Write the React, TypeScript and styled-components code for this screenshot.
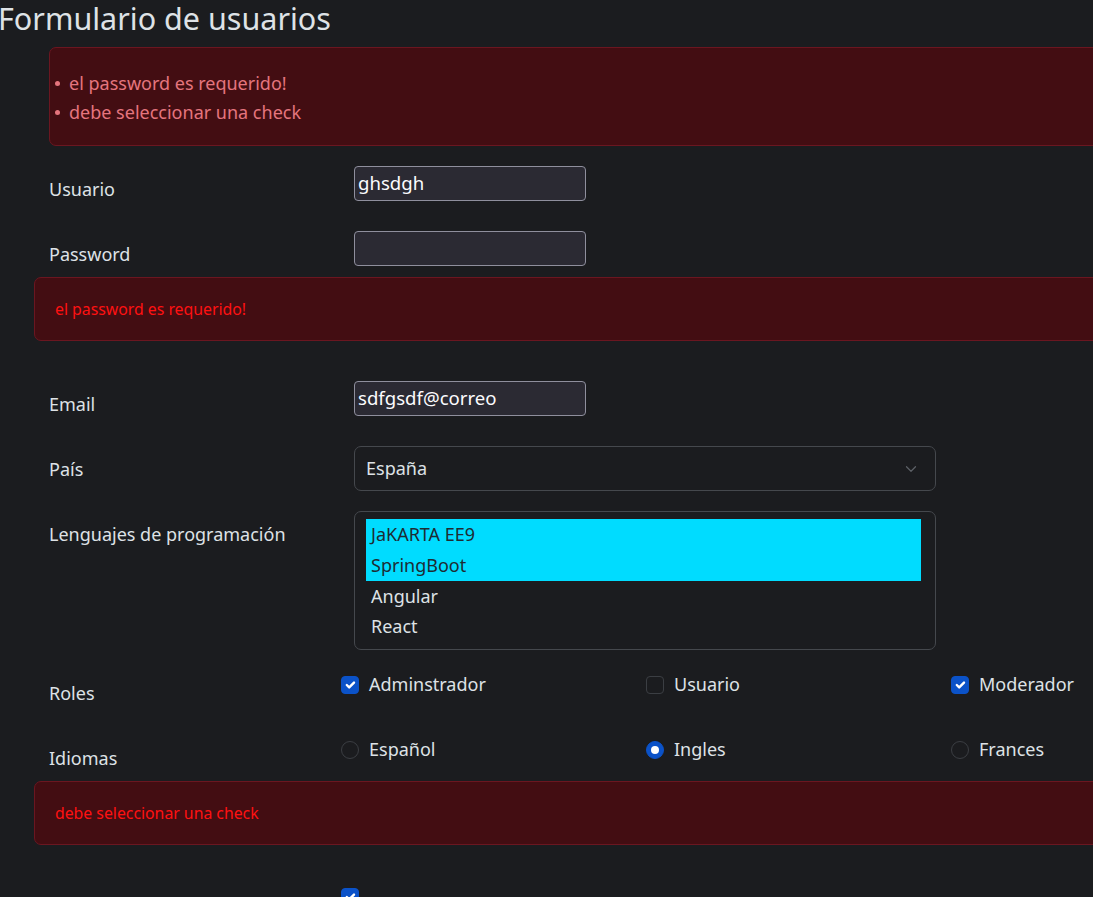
import React from 'react';
import styled, { createGlobalStyle } from 'styled-components';

const GlobalStyle = createGlobalStyle`
  html, body {
    margin: 0;
    padding: 0;
    background: #1b1c1f;
    overflow: hidden;
  }
  body {
    font-family: "Noto Sans", "Open Sans", sans-serif;
    font-size: 18px;
    line-height: 1.5;
    color: #dee2e6;
  }
  * {
    box-sizing: border-box;
  }
`;

const Title = styled.h1`
  margin: 0 0 10px -2px;
  font-size: 30.5px;
  font-weight: 400;
  line-height: 37px;
  color: #dee2e6;
`;

const Page = styled.div`
  width: 1300px;
`;

const Form = styled.form`
  padding-left: 49px;
`;

const SummaryAlert = styled.div`
  background: #430d12;
  border: 1px solid #6b1620;
  border-radius: 7px;
  padding: 21px 19px 18px 5px;
  margin-bottom: 20px;

  ul {
    margin: 0;
    padding: 0;
    list-style: none;
  }

  li {
    display: flex;
    align-items: center;
    color: #e5757e;
    line-height: 29px;
  }

  li::before {
    content: '';
    flex: none;
    width: 5px;
    height: 5px;
    border-radius: 50%;
    background: #e5757e;
    margin-right: 9px;
  }
`;

const FieldAlert = styled.div`
  margin: 1px 0 40px -15px;
  background: #430d12;
  border: 1px solid #6b1620;
  border-radius: 7px;
  padding: 19px 20px;
  color: #ff1111;
  font-size: 15.8px;
  line-height: 24px;
`;

const Row = styled.div<{ $tight?: boolean }>`
  display: grid;
  grid-template-columns: 305px 1fr;
  align-items: start;
  margin-bottom: ${(p) => (p.$tight ? '0' : '20px')};
`;

const Label = styled.label`
  padding: 9px 0 7px;
  line-height: 29px;
  color: #dee2e6;
`;

const TextInput = styled.div`
  width: 232px;
  height: 35px;
  background: #2b2a33;
  border: 1px solid #8f8f9d;
  border-radius: 4px;
  color: #fbfbfe;
  padding: 0 3px;
  font-size: 18.6px;
  line-height: 32px;
  white-space: nowrap;
`;

const SelectBox = styled.div`
  width: 582px;
  height: 45px;
  border: 1px solid #45484d;
  border-radius: 7px;
  padding: 0 16px 0 11px;
  display: flex;
  align-items: center;
  justify-content: space-between;
  color: #dee2e6;
`;

const ListBox = styled.div`
  width: 582px;
  height: 139px;
  border: 1px solid #45484d;
  border-radius: 7px;
  padding: 7px 14px 7px 11px;
`;

const Option = styled.div<{ $selected?: boolean }>`
  height: 30.75px;
  line-height: 30.75px;
  padding-left: 5px;
  background: ${(p) => (p.$selected ? '#00dcff' : 'transparent')};
  color: ${(p) => (p.$selected ? '#1e2c33' : '#dee2e6')};
`;

const CheckGroup = styled.div`
  display: grid;
  grid-template-columns: repeat(3, 305px);
  margin-left: -13px;
`;

const CheckItem = styled.div`
  display: flex;
  align-items: center;
  gap: 10px;
  line-height: 29px;
  white-space: nowrap;
`;

const Box = styled.span<{ $checked?: boolean; $round?: boolean }>`
  flex: none;
  width: 18px;
  height: 18px;
  border-radius: ${(p) => (p.$round ? '50%' : '4px')};
  border: 1px solid ${(p) => (p.$checked ? '#0b52c8' : '#3b3e43')};
  background: ${(p) => (p.$checked ? '#0b52c8' : 'transparent')};
  display: flex;
  align-items: center;
  justify-content: center;
`;

const LastRow = styled.div`
  display: grid;
  grid-template-columns: 305px 1fr;
  padding-top: 3px;
`;

const Check = ({ checked, round, label }: { checked?: boolean; round?: boolean; label?: string }) => (
  <CheckItem>
    <Box $checked={checked} $round={round}>
      {checked && !round && (
        <svg width="18" height="18" viewBox="0 0 20 20">
          <path d="m6 10 3 3 6-6" fill="none" stroke="#fff" strokeWidth="3" strokeLinecap="round" strokeLinejoin="round" />
        </svg>
      )}
      {checked && round && (
        <svg width="16" height="16" viewBox="-4 -4 8 8">
          <circle r="2" fill="#fff" />
        </svg>
      )}
    </Box>
    {label && <span>{label}</span>}
  </CheckItem>
);

const Chevron = () => (
  <svg width="16" height="12" viewBox="0 0 16 16" style={{ overflow: 'visible' }}>
    <path d="m2 5 6 6 6-6" fill="none" stroke="#5d6167" strokeWidth="1.6" strokeLinecap="round" strokeLinejoin="round" />
  </svg>
);

const lenguajes = [
  { name: 'JaKARTA EE9', selected: true },
  { name: 'SpringBoot', selected: true },
  { name: 'Angular', selected: false },
  { name: 'React', selected: false },
];

export default function App() {
  return (
    <Page>
      <GlobalStyle />
      <Title>Formulario de usuarios</Title>
      <Form>
        <SummaryAlert>
          <ul>
            <li>el password es requerido!</li>
            <li>debe seleccionar una check</li>
          </ul>
        </SummaryAlert>

        <Row>
          <Label>Usuario</Label>
          <TextInput>ghsdgh</TextInput>
        </Row>

        <Row $tight>
          <Label>Password</Label>
          <TextInput />
        </Row>
        <FieldAlert>el password es requerido!</FieldAlert>

        <Row>
          <Label>Email</Label>
          <TextInput>sdfgsdf@correo</TextInput>
        </Row>

        <Row>
          <Label>País</Label>
          <SelectBox>
            <span>España</span>
            <Chevron />
          </SelectBox>
        </Row>

        <Row>
          <Label>Lenguajes de programación</Label>
          <ListBox>
            {lenguajes.map((l) => (
              <Option key={l.name} $selected={l.selected}>
                {l.name}
              </Option>
            ))}
          </ListBox>
        </Row>

        <Row>
          <Label>Roles</Label>
          <CheckGroup>
            <Check checked label="Adminstrador" />
            <Check label="Usuario" />
            <Check checked label="Moderador" />
          </CheckGroup>
        </Row>

        <Row $tight>
          <Label>Idiomas</Label>
          <CheckGroup>
            <Check round label="Español" />
            <Check round checked label="Ingles" />
            <Check round label="Frances" />
          </CheckGroup>
        </Row>
        <FieldAlert>debe seleccionar una check</FieldAlert>

        <LastRow>
          <span />
          <CheckGroup>
            <Check checked />
          </CheckGroup>
        </LastRow>
      </Form>
    </Page>
  );
}
